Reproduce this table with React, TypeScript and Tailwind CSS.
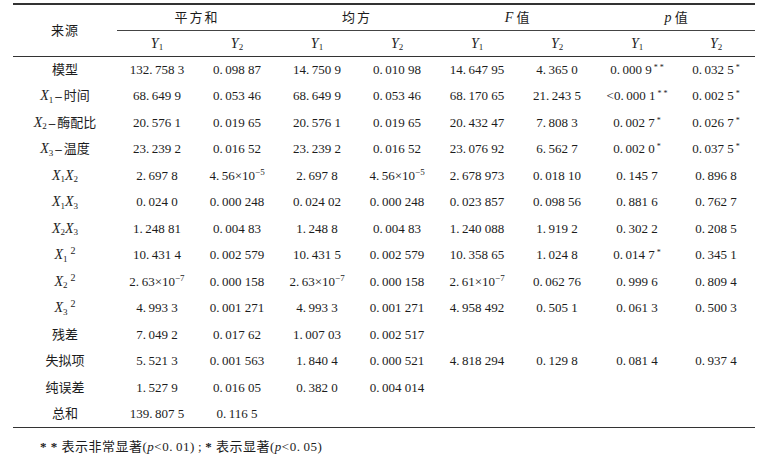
import { FunctionComponent, ReactNode } from "react";

type Cell = string | { v: string; star?: string; exp?: string };

const X = ({ n }: { n: number }) => (
  <>
    <i className="text-[14px]">X</i>
    <sub className="text-[9px]">{n}</sub>
  </>
);

const Dash = () => <span className="mx-[2px] font-bold">–</span>;

const Sq = () => <sup className="text-[10px] ml-[3px]">2</sup>;

const rows: { label: ReactNode; cells: Cell[] }[] = [
  {
    label: "模型",
    cells: ["132.758 3", "0.098 87", "14.750 9", "0.010 98", "14.647 95", "4.365 0", { v: "0.000 9", star: "* *" }, { v: "0.032 5", star: "*" }],
  },
  {
    label: (<><X n={1} /><Dash />时间</>),
    cells: ["68.649 9", "0.053 46", "68.649 9", "0.053 46", "68.170 65", "21.243 5", { v: "<0.000 1", star: "* *" }, { v: "0.002 5", star: "*" }],
  },
  {
    label: (<><X n={2} /><Dash />酶配比</>),
    cells: ["20.576 1", "0.019 65", "20.576 1", "0.019 65", "20.432 47", "7.808 3", { v: "0.002 7", star: "*" }, { v: "0.026 7", star: "*" }],
  },
  {
    label: (<><X n={3} /><Dash />温度</>),
    cells: ["23.239 2", "0.016 52", "23.239 2", "0.016 52", "23.076 92", "6.562 7", { v: "0.002 0", star: "*" }, { v: "0.037 5", star: "*" }],
  },
  {
    label: (<><X n={1} /><X n={2} /></>),
    cells: ["2.697 8", { v: "4.56×10", exp: "−5" }, "2.697 8", { v: "4.56×10", exp: "−5" }, "2.678 973", "0.018 10", "0.145 7", "0.896 8"],
  },
  {
    label: (<><X n={1} /><X n={3} /></>),
    cells: ["0.024 0", "0.000 248", "0.024 02", "0.000 248", "0.023 857", "0.098 56", "0.881 6", "0.762 7"],
  },
  {
    label: (<><X n={2} /><X n={3} /></>),
    cells: ["1.248 81", "0.004 83", "1.248 8", "0.004 83", "1.240 088", "1.919 2", "0.302 2", "0.208 5"],
  },
  {
    label: (<><X n={1} /><Sq /></>),
    cells: ["10.431 4", "0.002 579", "10.431 5", "0.002 579", "10.358 65", "1.024 8", { v: "0.014 7", star: "*" }, "0.345 1"],
  },
  {
    label: (<><X n={2} /><Sq /></>),
    cells: [{ v: "2.63×10", exp: "−7" }, "0.000 158", { v: "2.63×10", exp: "−7" }, "0.000 158", { v: "2.61×10", exp: "−7" }, "0.062 76", "0.999 6", "0.809 4"],
  },
  {
    label: (<><X n={3} /><Sq /></>),
    cells: ["4.993 3", "0.001 271", "4.993 3", "0.001 271", "4.958 492", "0.505 1", "0.061 3", "0.500 3"],
  },
  { label: "残差", cells: ["7.049 2", "0.017 62", "1.007 03", "0.002 517", "", "", "", ""] },
  { label: "失拟项", cells: ["5.521 3", "0.001 563", "1.840 4", "0.000 521", "4.818 294", "0.129 8", "0.081 4", "0.937 4"] },
  { label: "纯误差", cells: ["1.527 9", "0.016 05", "0.382 0", "0.004 014", "", "", "", ""] },
  { label: "总和", cells: ["139.807 5", "0.116 5", "", "", "", "", "", ""] },
];

// journal style: small gap after the decimal point
const fmt = (s: string) => s.replace(".", ".\u2009");

const Value = ({ c }: { c: Cell }) => {
  if (typeof c === "string") return <>{fmt(c)}</>;
  return (
    <>
      {fmt(c.v)}
      {c.exp && <sup className="text-[9px]">{c.exp}</sup>}
      {c.star && <sup className="text-[8px] ml-[2px]">{c.star}</sup>}
    </>
  );
};

const YHead = ({ n }: { n: number }) => (
  <th className="font-normal h-[26px] text-center">
    <i className="text-[14px]">Y</i>
    <sub className="text-[9px]">{n}</sub>
  </th>
);

const App: FunctionComponent = () => {
  return (
    <div
      className="w-[778px] h-[456px] bg-white text-[#1c1c1c] text-[13px] pt-[3px] pl-[13px]"
      style={{ fontFamily: '"Liberation Serif", "Noto Sans CJK SC", serif' }}
    >
      <table className="table-fixed border-collapse w-[742px]">
        <colgroup>
          <col className="w-[104px]" />
          <col className="w-[80px]" />
          <col className="w-[80px]" />
          <col className="w-[80px]" />
          <col className="w-[80px]" />
          <col className="w-[80px]" />
          <col className="w-[80px]" />
          <col className="w-[80px]" />
          <col className="w-[78px]" />
        </colgroup>
        <thead>
          <tr className="border-t-[2px] border-[#333]">
            <th rowSpan={2} className="font-normal text-center tracking-[1px]">
              来源
            </th>
            <th colSpan={2} className="font-normal h-[26px] text-center border-b border-[#444] tracking-[2px]">
              平方和
            </th>
            <th colSpan={2} className="font-normal text-center border-b border-[#444] tracking-[2px]">
              均方
            </th>
            <th colSpan={2} className="font-normal text-center border-b border-[#444]">
              <i className="text-[14px]">F</i> 值
            </th>
            <th colSpan={2} className="font-normal text-center border-b border-[#444]">
              <i className="text-[14px]">p</i> 值
            </th>
          </tr>
          <tr className="border-b-[1.5px] border-[#333]">
            <YHead n={1} />
            <YHead n={2} />
            <YHead n={1} />
            <YHead n={2} />
            <YHead n={1} />
            <YHead n={2} />
            <YHead n={1} />
            <YHead n={2} />
          </tr>
        </thead>
        <tbody className="border-b-[1.5px] border-[#333]">
          {rows.map((r, i) => (
            <tr key={i} className="h-[26.5px]">
              <td className="text-center whitespace-nowrap">{r.label}</td>
              {r.cells.map((c, j) => (
                <td key={j} className="text-center whitespace-nowrap">
                  <Value c={c} />
                </td>
              ))}
            </tr>
          ))}
        </tbody>
      </table>
      <div className="mt-[9px] ml-[27px] text-[13px] tracking-[0.5px]">
        <span className="font-bold">* *</span> 表示非常显著(<i>p</i>&lt;0.{"\u2009"}01)&thinsp;;&thinsp;<span className="font-bold">*</span> 表示显著(<i>p</i>&lt;0.{"\u2009"}05)
      </div>
    </div>
  );
};

export default App;
